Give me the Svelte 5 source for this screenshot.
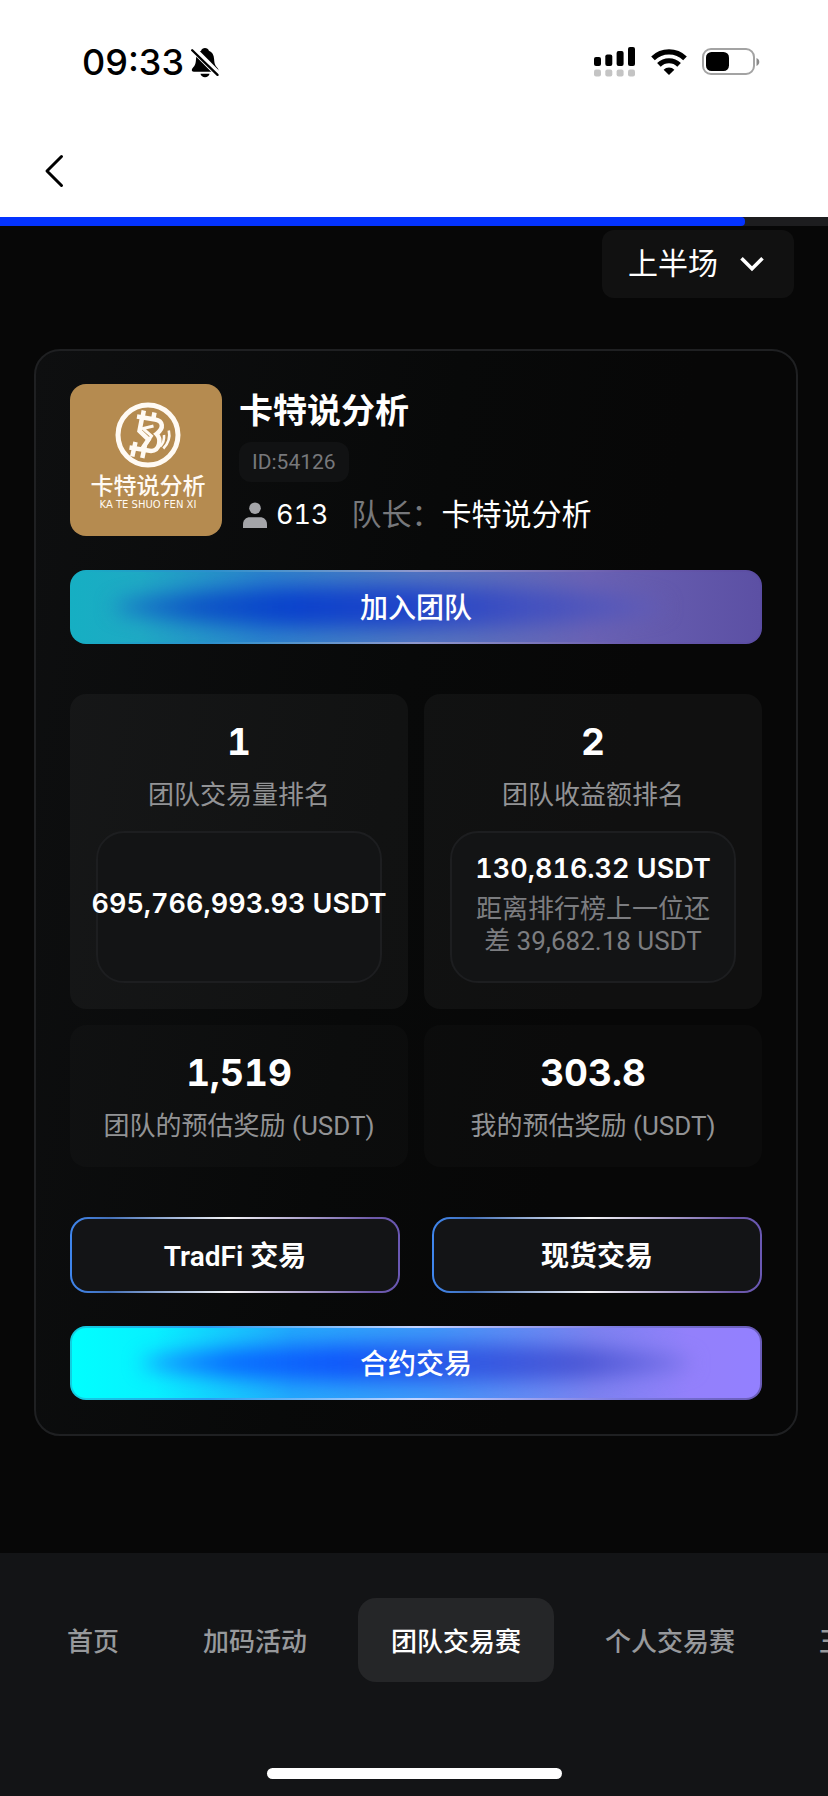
<script>
  const tabs = ['首页', '加码活动', '团队交易赛', '个人交易赛', '王'];
  let active = $state(2);
  let half = $state('first');
  const progress = 90;
</script>

<div class="screen">
  <header class="top">
    <div class="status">
      <div class="time">
        <span>09:33</span>
        <svg width="28" height="31" viewBox="0 0 28 31" aria-hidden="true">
          <path d="M14 1c1.900 0 3.400 1.100 3.900 2.700 3.300 1.300 5 4.200 5.200 8.300.2 4.600 1 6.600 3.400 9 .6.700.9 1.200.9 2 0 1.100-.8 1.700-2 1.700H2.800C1.500 24.700.8 24 .8 23c0-.8.3-1.400.9-2 2.400-2.400 3.100-4.400 3.300-9 .2-4.100 1.900-7 5.100-8.300C10.600 2.100 12.100 1 14 1z" />
          <path d="M9.500 26.700h9c-.4 2.200-2.200 3.500-4.500 3.500s-4.100-1.300-4.500-3.500z" />
          <path d="M1 1l27 27" stroke="#fff" stroke-width="6.500" />
          <path d="M1.200 3.300l25.300 24.600" stroke="#000" stroke-width="2.300" stroke-linecap="round" />
        </svg>
      </div>
      <div class="signals">
        <svg width="42" height="30" viewBox="0 0 42 30" aria-hidden="true">
          <rect x="0" y="10" width="7" height="9" rx="2" />
          <rect x="11.300" y="7.500" width="7" height="11.500" rx="2" />
          <rect x="22.600" y="4" width="7" height="15" rx="2" />
          <rect x="34" y="0" width="7" height="19" rx="2" />
          <g fill="#c4c4c4">
            <rect x="0" y="22.500" width="7" height="7" rx="2" />
            <rect x="11.300" y="22.500" width="7" height="7" rx="2" />
            <rect x="22.600" y="22.500" width="7" height="7" rx="2" />
            <rect x="34" y="22.500" width="7" height="7" rx="2" />
          </g>
        </svg>
        <svg width="36" height="28" viewBox="0 0 36 28" aria-hidden="true">
          <g fill="none" stroke="#000" stroke-width="5.200">
            <path d="M2 10.300a23 23 0 0 1 32 0" />
            <path d="M7.900 16.800a14.600 14.600 0 0 1 20.200 0" />
          </g>
          <path d="M18 27l-5.400-5.200a7.600 7.600 0 0 1 10.800 0z" />
        </svg>
        <svg width="58" height="28" viewBox="0 0 58 28" aria-hidden="true">
          <rect x="1" y="1" width="51" height="25" rx="8" fill="none" stroke="#a3a3a3" stroke-width="2" />
          <rect x="4" y="4" width="23" height="19" rx="5.500" />
          <path d="M54.500 10v8c1.800-.8 2.800-2.200 2.800-4s-1-3.200-2.800-4z" fill="#8a8a8a" />
        </svg>
      </div>
    </div>
    <div class="bar">
      <button class="back" aria-label="返回">
        <svg width="20" height="34" viewBox="0 0 20 34" fill="none" stroke="#000" stroke-width="3" stroke-linecap="round" stroke-linejoin="round">
          <path d="M17.500 2.500L3 17l14.500 14.500" />
        </svg>
      </button>
    </div>
  </header>

  <div class="progress"><div class="fill" style="width: {progress}%"></div></div>

  <main>
    <div class="filter">
      <label class="picker">
        <select bind:value={half} aria-label="赛段">
          <option value="first">上半场</option>
        </select>
        <svg width="24" height="16" viewBox="0 0 24 16" fill="none" stroke="#fff" stroke-width="3.600" aria-hidden="true">
          <path d="M1.500 2.300L12 12.800 22.500 2.300" />
        </svg>
      </label>
    </div>

    <section class="card">
      <div class="team">
        <div class="avatar">
          <svg width="66" height="66" viewBox="0 0 66 66" fill="none" stroke="#fffaf3" aria-hidden="true">
            <circle cx="33" cy="33" r="30" stroke-width="5" />
            <g stroke-width="4.500">
              <path d="M22 14.500l18 3c8 1.500 9.500 8.500 1.500 14.500 5 5 3.500 16.500-5.500 17l-21.500-3.500" />
              <path d="M27 16l-2.500 13 9 8.500-6 9" />
              <path d="M38.500 24l-10.500 2.500 8.500 7.500-5 7.500" stroke-width="3" />
              <path d="M28.800 8.500l-1.500 8M39.500 10.500l-1.500 8M20.500 40l-3.200 14.500M30 43l-2.700 13" />
            </g>
            <path d="M49 33c.5 4.500-.8 8.500-4 11.500M53.800 28.500c1.500 6.500-.5 13-5.500 18" stroke-width="2.600" />
          </svg>
          <span class="logo-name">卡特说分析</span>
          <span class="logo-latin">KA TE SHUO FEN XI</span>
        </div>
        <div class="info">
          <h1>卡特说分析</h1>
          <span class="id">ID:54126</span>
          <div class="meta">
            <svg width="24" height="26" viewBox="0 0 24 26" fill="#a4a5a9" aria-hidden="true">
              <circle cx="12" cy="6.200" r="5.800" />
              <path d="M0 26v-3.500C0 18 3 15.300 7 15.300h10c4 0 7 2.700 7 7.200V26z" />
            </svg>
            <span class="count">613</span>
            <span class="muted">队长：</span>
            <span>卡特说分析</span>
          </div>
        </div>
      </div>

      <button class="cta dim">加入团队</button>

      <div class="stats">
        <div class="stat">
          <strong>1</strong>
          <span class="label">团队交易量排名</span>
          <div class="box"><b>695,766,993.93 USDT</b></div>
        </div>
        <div class="stat">
          <strong>2</strong>
          <span class="label">团队收益额排名</span>
          <div class="box">
            <b>130,816.32 USDT</b>
            <p>距离排行榜上一位还差 39,682.18 USDT</p>
          </div>
        </div>
        <div class="stat low">
          <strong>1,519</strong>
          <span class="label">团队的预估奖励 (USDT)</span>
        </div>
        <div class="stat low">
          <strong>303.8</strong>
          <span class="label">我的预估奖励 (USDT)</span>
        </div>
      </div>

      <div class="pair">
        <button class="outline">TradFi 交易</button>
        <button class="outline">现货交易</button>
      </div>
      <button class="cta">合约交易</button>
    </section>
  </main>

  <footer>
    <nav>
      {#each tabs as tab, i}
        <button class="tab" class:active={active === i} onclick={() => (active = i)}>{tab}</button>
      {/each}
    </nav>
    <div class="home"></div>
  </footer>
</div>

<style>
  :global(body) {
    margin: 0;
    background: #070707;
  }
  .screen {
    min-height: 100vh;
    display: flex;
    flex-direction: column;
    overflow: hidden;
    background: #070707;
    color: #fff;
    font-family: Roboto, 'Noto Sans CJK SC', sans-serif;
    font-size: 28px;
  }
  .screen :global(*) {
    box-sizing: border-box;
  }
  button,
  select {
    font: inherit;
    color: inherit;
    border: 0;
    background: none;
    padding: 0;
    cursor: pointer;
  }
  svg {
    display: block;
    flex: none;
  }

  .top {
    background: #fff;
    color: #000;
  }
  .status {
    display: flex;
    justify-content: space-between;
    align-items: center;
    height: 124px;
    padding: 0 68px 0 82px;
  }
  .time {
    display: flex;
    align-items: center;
    gap: 7px;
    font-family: Inter, sans-serif;
    font-size: 36px;
    font-weight: 500;
  }
  .signals {
    display: flex;
    align-items: center;
    gap: 15px;
  }
  .bar {
    display: flex;
    align-items: center;
    height: 93px;
    padding: 0 44px;
  }

  .progress {
    height: 9px;
    background: #1d1d1f;
  }
  .fill {
    height: 100%;
    background: #0433ff;
    border-radius: 0 4px 4px 0;
  }

  main {
    flex: 1;
    padding: 4px 30px 64px 34px;
  }
  .filter {
    display: flex;
    justify-content: flex-end;
    padding-right: 4px;
    margin-bottom: 51px;
  }
  .picker {
    display: flex;
    align-items: center;
    gap: 22px;
    height: 68px;
    padding: 0 30px 0 26px;
    border-radius: 12px;
    background: #111;
  }
  select {
    appearance: none;
    font-size: 30px;
    line-height: 40px;
    outline: none;
  }
  option {
    color: #000;
  }

  .card {
    display: flex;
    flex-direction: column;
    padding: 33px 34px 34px;
    border: 2px solid #1f2022;
    border-radius: 26px;
    background: linear-gradient(100deg, #0e0f10 0%, #080909 45%, #070707 70%);
  }
  .team {
    display: flex;
    gap: 17px;
  }
  .avatar {
    display: flex;
    flex-direction: column;
    align-items: center;
    flex: none;
    width: 152px;
    height: 152px;
    padding: 18px 0 0 4px;
    border-radius: 16px;
    background: #b58b50;
    color: #fffaf3;
    white-space: nowrap;
  }
  .logo-name {
    margin-top: 4px;
    font-size: 23px;
    font-weight: 500;
    line-height: 30px;
  }
  .logo-latin {
    font-family: 'DejaVu Sans', sans-serif;
    font-size: 10px;
    line-height: 6px;
  }
  .info {
    display: flex;
    flex-direction: column;
    align-items: flex-start;
    min-width: 0;
  }
  h1 {
    margin: 5px 0 9px;
    font-size: 34px;
    font-weight: 600;
    line-height: 44px;
  }
  .id {
    padding: 0 13px;
    border-radius: 12px;
    background: #111213;
    color: #77787b;
    font-size: 21px;
    line-height: 40px;
  }
  .meta {
    display: flex;
    align-items: center;
    margin-top: 13px;
    padding-left: 4px;
    font-size: 30px;
    line-height: 40px;
    white-space: nowrap;
  }
  .count {
    margin: 0 23px 0 9px;
    font-family: Inter, sans-serif;
    font-size: 27px;
    font-variant-numeric: tabular-nums;
  }
  .muted {
    color: #77787b;
  }

  .cta {
    position: relative;
    isolation: isolate;
    overflow: hidden;
    height: 74px;
    margin-top: 33px;
    padding-bottom: 2px;
    border: 2px solid transparent;
    border-radius: 16px;
    background:
      linear-gradient(90deg, #00ffff 0%, #08f0ff 12%, #22a8fc 32%, #3f98fa 52%, #7d82f0 76%, #9380fb 90%, #9380ff 100%) padding-box,
      linear-gradient(90deg, #11cfe0 0%, #2a9df0 20%, #c4d4ff 50%, #7a78e0 80%, #6a5cb8 100%) border-box;
    font-weight: 500;
  }
  .cta::before {
    content: '';
    position: absolute;
    z-index: -1;
    inset: 16px 10% 16px 10%;
    border-radius: 50%;
    background: linear-gradient(90deg, #18a0ff 0%, #086cff 16%, #1058fa 36%, #2f58e4 58%, #4a56d4 80%, #7a72e8 100%);
    filter: blur(10px);
  }
  .dim {
    margin-top: 34px;
    background:
      linear-gradient(90deg, #16afc3 0%, #1fa9c4 10%, #2b82cc 28%, #5276c0 50%, #6a62b4 75%, #5c50a4 100%) padding-box,
      linear-gradient(90deg, #16afc3 0%, #2b90cc 20%, #8f98cc 50%, #6a5cae 80%, #5a4ca2 100%) border-box;
  }
  .dim::before {
    inset: 14px 14% 14px 6%;
    background: linear-gradient(90deg, #1a80c4 0%, #0d54c6 16%, #0a42cc 32%, #2044c8 54%, #4050c0 74%, #625cb6 100%);
  }

  .stats {
    display: grid;
    grid-template-columns: 1fr 1fr;
    gap: 16px;
    margin-top: 50px;
  }
  .stat {
    display: flex;
    flex-direction: column;
    align-items: center;
    min-width: 0;
    padding: 24px 26px 26px;
    border-radius: 16px;
    background: rgba(255, 255, 255, 0.04);
  }
  .low {
    padding-bottom: 22px;
    background: rgba(255, 255, 255, 0.02);
  }
  strong {
    font-family: Inter, sans-serif;
    font-size: 37px;
    font-weight: 700;
    font-variant-numeric: tabular-nums;
    line-height: 48px;
  }
  .label {
    margin-top: 10px;
    color: #929395;
    font-size: 26px;
    line-height: 38px;
    white-space: nowrap;
  }
  .box {
    display: flex;
    flex-direction: column;
    align-items: center;
    justify-content: center;
    align-self: stretch;
    height: 152px;
    margin-top: 17px;
    padding: 0 24px 6px;
    border: 2px solid #1d1e20;
    border-radius: 28px;
    background: #131415;
  }
  b {
    font-family: Inter, sans-serif;
    font-size: 27px;
    font-weight: 600;
    font-variant-numeric: tabular-nums;
    line-height: 36px;
    white-space: nowrap;
  }
  p {
    margin: 6px 0 0;
    color: #7c7d80;
    font-size: 26px;
    line-height: 32px;
    text-align: center;
  }

  .pair {
    display: grid;
    grid-template-columns: 1fr 1fr;
    gap: 32px;
    margin-top: 50px;
  }
  .outline {
    height: 76px;
    padding-bottom: 2px;
    border: 2px solid transparent;
    border-radius: 18px;
    background:
      linear-gradient(#131416, #131416) padding-box,
      linear-gradient(90deg, #3f86ee 0%, #4470b8 12%, #f4f4f6 48%, #6c58a8 92%, #6a58b4 100%) border-box;
    font-weight: 600;
  }

  footer {
    display: flex;
    flex-direction: column;
    height: 243px;
    padding-top: 45px;
    background: #131416;
  }
  nav {
    display: flex;
    gap: 18px;
    padding-left: 34px;
    overflow: hidden;
  }
  .tab {
    flex: none;
    height: 84px;
    padding: 0 33px 2px;
    border-radius: 18px;
    color: #97999c;
    font-size: 26px;
    font-weight: 500;
    white-space: nowrap;
  }
  .active {
    background: #252628;
    color: #fff;
  }
  .home {
    width: 295px;
    height: 11px;
    margin: auto auto 17px;
    border-radius: 6px;
    background: #fff;
  }
</style>
